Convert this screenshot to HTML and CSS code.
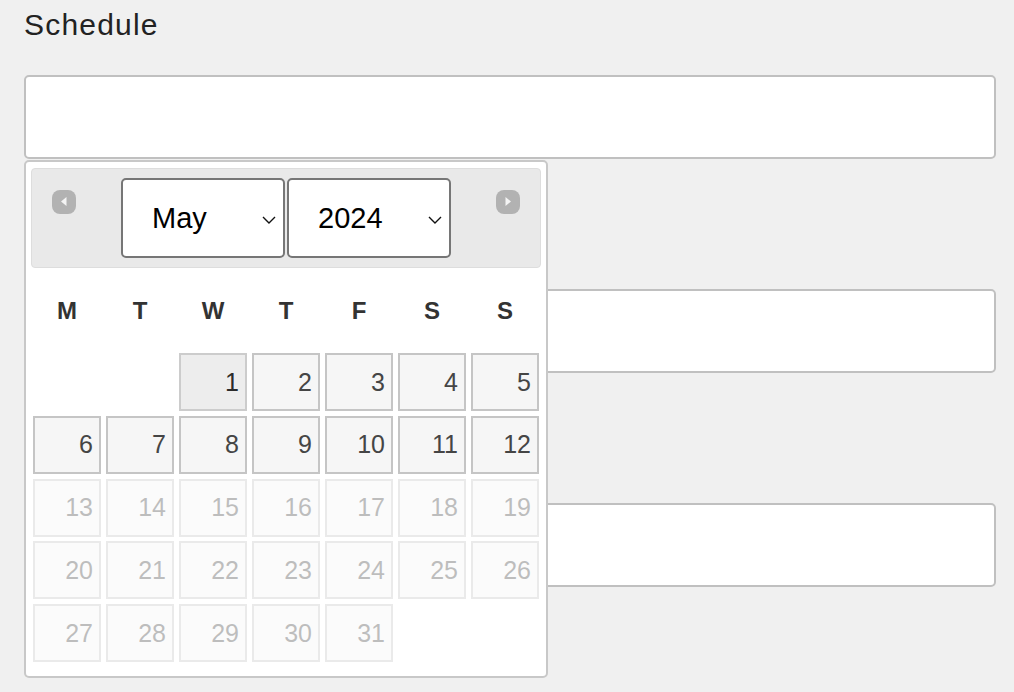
FILE: index.html
```html
<!DOCTYPE html>
<html lang="en">
<head>
<meta charset="utf-8">
<title>Schedule</title>
<link rel="stylesheet" href="styles.css">
</head>
<body>
<main class="form">
  <div class="field">
    <label class="field-label" for="schedule">Schedule</label>
    <div class="input-wrap">
      <input class="text-input" id="schedule" type="text">
      <div class="datepicker">
        <div class="dp-header">
          <span class="dp-nav dp-prev" title="Prev">
            <svg width="24" height="24" viewBox="0 0 24 24"><rect x="0" y="0" width="24" height="24" rx="8" fill="#b2b2b2"/><polygon points="14.5,7 14.5,16 9,11.5" fill="#f4f4f4"/></svg>
          </span>
          <div class="dp-selects">
            <div class="select-box">
              <select class="dp-select"><option>May</option></select>
              <svg class="chevron" width="14" height="8" viewBox="0 0 14 8"><polyline points="1,1 7,7 13,1" fill="none" stroke="#111" stroke-width="1.4"/></svg>
            </div>
            <div class="select-box">
              <select class="dp-select"><option>2024</option></select>
              <svg class="chevron" width="14" height="8" viewBox="0 0 14 8"><polyline points="1,1 7,7 13,1" fill="none" stroke="#111" stroke-width="1.4"/></svg>
            </div>
          </div>
          <span class="dp-nav dp-next" title="Next">
            <svg width="24" height="24" viewBox="0 0 24 24"><rect x="0" y="0" width="24" height="24" rx="8" fill="#b2b2b2"/><polygon points="9.5,7 9.5,16 15,11.5" fill="#f4f4f4"/></svg>
          </span>
        </div>
        <div class="dp-weekdays">
          <span>M</span><span>T</span><span>W</span><span>T</span><span>F</span><span>S</span><span>S</span>
        </div>
        <div class="dp-days">
          <span class="day-empty"></span><span class="day-empty"></span>
          <span class="day day-hover">1</span><span class="day">2</span><span class="day">3</span><span class="day">4</span><span class="day">5</span>
          <span class="day">6</span><span class="day">7</span><span class="day">8</span><span class="day">9</span><span class="day">10</span><span class="day">11</span><span class="day">12</span>
          <span class="day day-disabled">13</span><span class="day day-disabled">14</span><span class="day day-disabled">15</span><span class="day day-disabled">16</span><span class="day day-disabled">17</span><span class="day day-disabled">18</span><span class="day day-disabled">19</span>
          <span class="day day-disabled">20</span><span class="day day-disabled">21</span><span class="day day-disabled">22</span><span class="day day-disabled">23</span><span class="day day-disabled">24</span><span class="day day-disabled">25</span><span class="day day-disabled">26</span>
          <span class="day day-disabled">27</span><span class="day day-disabled">28</span><span class="day day-disabled">29</span><span class="day day-disabled">30</span><span class="day day-disabled">31</span>
        </div>
      </div>
    </div>
  </div>
  <div class="field">
    <label class="field-label" for="start">Start Time</label>
    <div class="input-wrap"><input class="text-input" id="start" type="text"></div>
  </div>
  <div class="field">
    <label class="field-label" for="end">End Time</label>
    <div class="input-wrap"><input class="text-input" id="end" type="text"></div>
  </div>
  <div class="field">
    <label class="field-label" for="ret">Return Date</label>
    <div class="input-wrap"><input class="text-input" id="ret" type="text"></div>
  </div>
</main>
</body>
</html>
```

FILE: styles.css
```css
html, body {
  margin: 0;
  padding: 0;
  background: #f0f0f0;
  overflow: hidden;
}

.form {
  padding: 0 18px 0 24px;
  font-family: "Liberation Sans", Arial, sans-serif;
}

.field {
  margin-bottom: 55px;
}

.field-label {
  display: block;
  height: 50px;
  line-height: 50px;
  font-size: 30px;
  letter-spacing: 1.2px;
  color: #222222;
  margin-bottom: 25px;
}

.input-wrap {
  position: relative;
}

.text-input {
  display: block;
  box-sizing: border-box;
  width: 100%;
  height: 84px;
  margin: 0;
  border: 2px solid #c0c0c0;
  border-radius: 5px;
  background: #ffffff;
  font-family: inherit;
  font-size: 28px;
  padding: 0 14px;
}

/* datepicker popup */
.datepicker {
  position: absolute;
  left: 0;
  top: 85px;
  z-index: 10;
  width: 524px;
  box-sizing: border-box;
  padding: 6px 5px 14px 5px;
  background: #ffffff;
  border: 2px solid #c8c8c8;
  border-radius: 5px;
  font-family: "Liberation Sans", Arial, sans-serif;
}

.dp-header {
  box-sizing: border-box;
  height: 100px;
  display: grid;
  grid-template-columns: 1fr auto 1fr;
  align-items: start;
  padding: 9px 20px;
  background: #e9e9e9;
  border: 1px solid #dddddd;
  border-radius: 4px;
}

.dp-nav {
  display: block;
  width: 24px;
  height: 24px;
  margin-top: 12px;
}
.dp-nav svg { display: block; }
.dp-prev { justify-self: start; }
.dp-next { justify-self: end; }

.dp-selects {
  display: flex;
  gap: 2px;
}

.select-box {
  position: relative;
  width: 164px;
  height: 80px;
}

.dp-select {
  -webkit-appearance: none;
  appearance: none;
  box-sizing: border-box;
  width: 100%;
  height: 100%;
  margin: 0;
  padding: 0 0 0 29px;
  border: 2px solid #767676;
  border-radius: 5px;
  background: #ffffff;
  color: #000000;
  font-family: "Liberation Sans", Arial, sans-serif;
  font-size: 29px;
}

.chevron {
  position: absolute;
  right: 9px;
  top: 38px;
  pointer-events: none;
}

.dp-weekdays {
  display: grid;
  grid-template-columns: repeat(7, 68px);
  column-gap: 5px;
  margin: 0 2px;
  height: 85px;
  line-height: 85px;
  text-align: center;
  font-size: 24px;
  font-weight: bold;
  color: #333333;
}

.dp-days {
  display: grid;
  grid-template-columns: repeat(7, 68px);
  grid-auto-rows: 58px;
  column-gap: 5px;
  row-gap: 4.75px;
  margin: 0 2px;
}

.day {
  box-sizing: border-box;
  display: flex;
  align-items: center;
  justify-content: flex-end;
  padding-right: 6px;
  border: 2px solid #c5c5c5;
  background: #f6f6f6;
  color: #454545;
  font-size: 25px;
}

.day-hover {
  background: #ededed;
  border-color: #cccccc;
  color: #2b2b2b;
}

.day-disabled {
  opacity: 0.35;
}
```
